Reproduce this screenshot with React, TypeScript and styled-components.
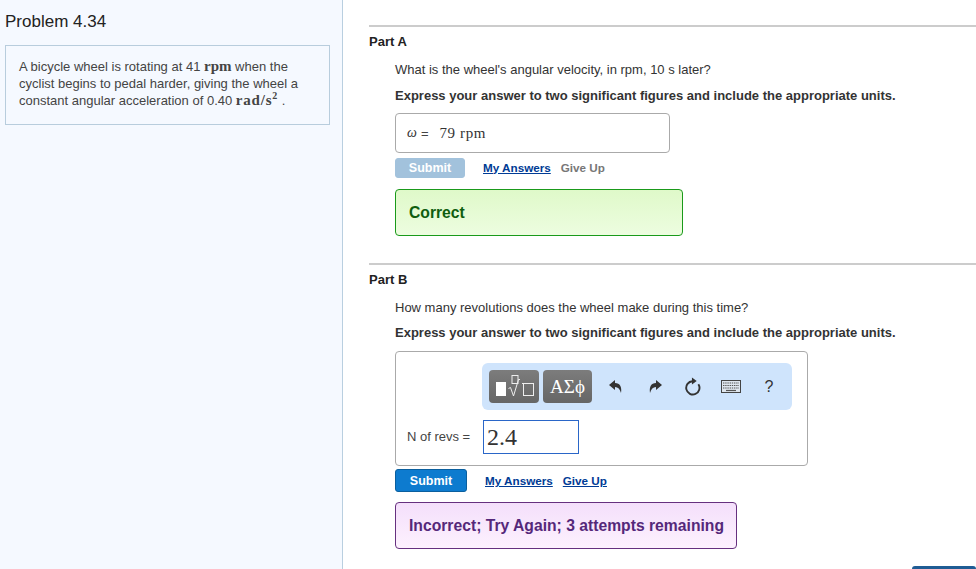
import React from 'react';
import styled, { createGlobalStyle } from 'styled-components';

const Global = createGlobalStyle`
  html, body { margin: 0; padding: 0; height: 569px; overflow: hidden; background: #fff; }
  body { font-family: "Liberation Sans", Arial, sans-serif; font-size: 13px; color: #333; }
`;
const Page = styled.div`display: flex; height: 569px; overflow: hidden;`;
const Sidebar = styled.aside`
  flex: none; width: 337px; background: #f5f9ff; border-right: 1px solid #b9cfe0; padding: 13px 0 0 5px;
`;
const Title = styled.h1`margin: 0 0 14px; font-size: 17px; font-weight: 400; line-height: 18px; color: #222;`;
const ProblemBox = styled.div`
  width: 310px; height: 66px; border: 1px solid #b8cddd; padding: 12px 0 0 13px;
  font-size: 13px; line-height: 17px; color: #444;
`;
const MathText = styled.span`font-family: "Liberation Serif", "DejaVu Serif", serif; font-size: 15px; line-height: 0; font-weight: 700; color: #444; letter-spacing: ${p => p.$track || 0}px;`;
const Sup = styled.sup`font-size: 10px; line-height: 0;`;
const Main = styled.main`flex: 1; padding: 25px 0 0 26px; min-width: 0; display: flex; flex-direction: column;`;
const Part = styled.section`border-top: 2px solid #ccc; padding-top: 7px; margin-bottom: ${p => p.$gap}px;`;
const PartName = styled.h2`margin: 0; font-size: 13px; line-height: 16px; font-weight: 700; color: #222;`;
const Body = styled.div`padding: 12px 0 0 26px;`;
const Question = styled.p`margin: 0; line-height: 16px; color: #333;`;
const Instruction = styled.p`margin: ${p => p.$top}px 0 0; line-height: 16px; font-size: 13px; font-weight: 700; color: #333;`;
const AnswerBox = styled.div`
  width: 262px; height: 38px; margin-top: 9px; border: 1px solid #aaa; border-radius: 4px; display: flex; align-items: center; padding-left: 11px; gap: 4px;
`;
const Symbol = styled.span`font-family: "Liberation Serif", serif; font-style: italic; font-size: 14px; color: #333;`;
const Eq = styled.span`font-size: 13px; color: #444;`;
const Value = styled.span`font-family: "Liberation Serif", serif; font-size: 15px; letter-spacing: 0.6px; color: #333; margin-left: 7px;`;
const Actions = styled.div`display: flex; align-items: center; margin-top: ${p => p.$top}px; height: ${p => p.$h}px;`;
const SubmitBtn = styled.button`
  border: 1px solid ${p => (p.disabled ? '#a2c2dc' : '#0a5f9e')}; background: ${p => (p.disabled ? '#a2c2dc' : '#0d7bcf')}; color: #fff;
  width: ${p => p.$w}px; height: 100%; border-radius: 3px; font: 700 12.5px "Liberation Sans", sans-serif; padding: 0; box-sizing: border-box;
`;
const Link = styled.a`color: #003b95; font-weight: 700; text-decoration: underline; margin-left: ${p => p.$ml}px; margin-bottom: ${p => p.$raise || 0}px; font-size: 11.7px;`;
const Muted = styled.span`color: #777; font-weight: 700; margin-left: 10px; margin-bottom: 2px; font-size: 11.7px;`;
const Banner = styled.div`
  margin-top: ${p => p.$top}px; width: ${p => p.$w}px; height: 47px; box-sizing: border-box; border-radius: 4px; padding-left: 13px; display: flex; align-items: center;
  font-size: 15.7px; font-weight: 700;
  border: 1px solid ${p => (p.$ok ? '#1a9a1a' : '#66307f')};
  color: ${p => (p.$ok ? '#0f5e0f' : '#55287a')};
  background: ${p => (p.$ok ? 'linear-gradient(#dff9c9, #edfde0)' : 'linear-gradient(#f4dffb, #fdf1fe)')};
`;
const EditorBox = styled.div`
  width: 413px; height: 115px; box-sizing: border-box; margin-top: 10px; border: 1px solid #aaa; border-radius: 4px; padding: 11px 0 0 11px; display: flex; flex-direction: column;
`;
const Toolbar = styled.div`
  margin-left: 75px; width: 310px; height: 47px; background: #cfe4fc; border-radius: 6px; display: flex; align-items: center; padding: 0 7px; box-sizing: border-box; flex: none;
`;
const ToolBtn = styled.div`
  width: ${p => p.$w}px; height: 33px; border-radius: 4px; background: linear-gradient(#7c7c7c, #666); margin-right: 4px; display: flex; align-items: center; justify-content: center; color: #fff; flex: none;
  font-family: "Liberation Serif", serif; font-size: 19px;
`;
const IconSlot = styled.div`
  width: ${p => p.$w}px; display: flex; justify-content: center; align-items: center; color: #333; flex: none; font-size: 16px;
`;
const AnswerRow = styled.div`display: flex; align-items: center; margin-top: 10px;`;
const AnswerLabel = styled.span`width: 76px; margin-bottom: 2px; font-size: 13px; color: #444;`;
const EditInput = styled.div`
  width: 96px; height: 34px; box-sizing: border-box; border: 1px solid #2a66c8; font-family: "Liberation Serif", serif; font-size: 24px; line-height: 32px; padding-left: 3px; color: #333;
`;
const Spacer = styled.div`flex: 1;`;
const Corner = styled.div`align-self: flex-end; width: 64px; height: 3px; background: #1f5c94; border-radius: 6px 6px 0 0; flex: none;`;

const Undo = ({ flip }: { flip?: boolean }) => (
  <svg width="16" height="16" viewBox="0 0 16 16" style={flip ? { transform: 'scaleX(-1)' } : undefined}>
    <path d="M1 6 L7 1 V4 C12 4 14 8 13 14 C12 10 10 8 7 8 V11 Z" fill="#333" />
  </svg>
);
const Redo = () => (
  <svg width="18" height="19" viewBox="0 0 17 18">
    <path d="M8 4 A6.3 6.3 0 1 0 13.6 6.8" fill="none" stroke="#333" strokeWidth="1.8" />
    <path d="M7.5 0.5 L12 3.8 L7.5 7 Z" fill="#333" />
  </svg>
);
const Keyboard = () => (
  <svg width="20" height="13" viewBox="0 0 20 13">
    <rect x="0.5" y="0.5" width="19" height="12" fill="#dfe6ee" stroke="#444" />
    <path d="M2 3H18M2 5.5H18M2 8H18" stroke="#555" strokeWidth="1.2" strokeDasharray="1.4 .8" />
    <path d="M5 10.5H15" stroke="#555" strokeWidth="1.2" />
  </svg>
);
const Templates = () => (
  <svg width="50" height="33" viewBox="0 0 50 33">
    <rect x="7" y="12" width="10" height="14" fill="#fff" />
    <rect x="23" y="5.5" width="6" height="8" fill="none" stroke="#eee" />
    <path d="M19.5 18.5 L21.5 17.5 L24.5 26 L29.5 9.5 H31" fill="none" stroke="#eee" />
    <path d="M33 13.5 H45" fill="none" stroke="#eee" />
    <rect x="34.5" y="13.5" width="10" height="12" fill="none" stroke="#eee" />
  </svg>
);

export default function App() {
  return (
    <Page>
      <Global />
      <Sidebar>
        <Title>Problem 4.34</Title>
        <ProblemBox>
          A bicycle wheel is rotating at 41 <MathText>rpm</MathText> when the<br />
          cyclist begins to pedal harder, giving the wheel a<br />
          constant angular acceleration of 0.40 <MathText $track={0.8}>rad/s<Sup>2</Sup></MathText> .
        </ProblemBox>
      </Sidebar>
      <Main>
        <Part $gap={27}>
          <PartName>Part A</PartName>
          <Body>
            <Question>What is the wheel's angular velocity, in rpm, 10 s later?</Question>
            <Instruction $top={10}>Express your answer to two significant figures and include the appropriate units.</Instruction>
            <AnswerBox>
              <Symbol>ω</Symbol><Eq>=</Eq><Value>79 rpm</Value>
            </AnswerBox>
            <Actions $top={5} $h={20}>
              <SubmitBtn disabled $w={70}>Submit</SubmitBtn>
              <Link $ml={18} $raise={2}>My Answers</Link>
              <Muted>Give Up</Muted>
            </Actions>
            <Banner $ok $top={11} $w={288}>Correct</Banner>
          </Body>
        </Part>
        <Part $gap={0}>
          <PartName>Part B</PartName>
          <Body>
            <Question>How many revolutions does the wheel make during this time?</Question>
            <Instruction $top={9}>Express your answer to two significant figures and include the appropriate units.</Instruction>
            <EditorBox>
              <Toolbar>
                <ToolBtn $w={50}><Templates /></ToolBtn>
                <ToolBtn $w={49}>ΑΣϕ</ToolBtn>
                <IconSlot $w={39}><Undo /></IconSlot>
                <IconSlot $w={39}><Undo flip /></IconSlot>
                <IconSlot $w={38}><Redo /></IconSlot>
                <IconSlot $w={38}><Keyboard /></IconSlot>
                <IconSlot $w={38}>?</IconSlot>
              </Toolbar>
              <AnswerRow>
                <AnswerLabel>N of revs =</AnswerLabel>
                <EditInput>2.4</EditInput>
              </AnswerRow>
            </EditorBox>
            <Actions $top={3} $h={23}>
              <SubmitBtn $w={72}>Submit</SubmitBtn>
              <Link $ml={18}>My Answers</Link>
              <Link $ml={10}>Give Up</Link>
            </Actions>
            <Banner $top={10} $w={342}>Incorrect; Try Again; 3 attempts remaining</Banner>
          </Body>
        </Part>
        <Spacer />
        <Corner />
      </Main>
    </Page>
  );
}
